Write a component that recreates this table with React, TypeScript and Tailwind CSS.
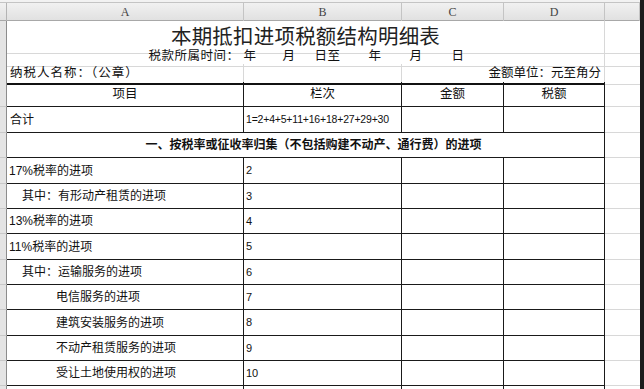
import React from 'react';

// column widths: row header, A, B, C, D, E
const GRID = 'grid grid-cols-[7px_237px_158px_102px_101px_35px] shrink-0';

const RowHead: React.FC = () => (
  <div className="bg-[#e4e4e4] border-r border-r-[#8c8c8c] border-b border-b-[#c8c8c8]" />
);

interface DataRow {
  label: string;
  no: string;
  indent: 0 | 1 | 2;
  h: string;
}

const rows: DataRow[] = [
  { label: '17%税率的进项', no: '2', indent: 0, h: 'h-[26px]' },
  { label: '其中：有形动产租赁的进项', no: '3', indent: 1, h: 'h-[25px]' },
  { label: '13%税率的进项', no: '4', indent: 0, h: 'h-[25px]' },
  { label: '11%税率的进项', no: '5', indent: 0, h: 'h-[26px]' },
  { label: '其中：运输服务的进项', no: '6', indent: 1, h: 'h-[25px]' },
  { label: '电信服务的进项', no: '7', indent: 2, h: 'h-[25px]' },
  { label: '建筑安装服务的进项', no: '8', indent: 2, h: 'h-[26px]' },
  { label: '不动产租赁服务的进项', no: '9', indent: 2, h: 'h-[25px]' },
  { label: '受让土地使用权的进项', no: '10', indent: 2, h: 'h-[25px]' },
  { label: '', no: '', indent: 0, h: 'h-[25px]' },
];

const indentClass = ['pl-[2px]', 'pl-[15px]', 'pl-[49px]'];

const cell = 'border-r border-b border-[#1a1a1a] flex items-center';
const light = 'border-b border-[#d8d8d8]';

export default function App() {
  return (
    <div className="w-[644px] h-[389px] overflow-hidden bg-white flex font-['Liberation_Sans','Noto_Sans_CJK_SC',sans-serif] text-[#111]">
      <div className="w-[640px] flex flex-col">
        {/* top edge */}
        <div className="h-[3px] shrink-0 bg-[#f2f2f2] border-b border-[#c4c4c4]" />

        {/* column letters */}
        <div className={`${GRID} h-[18px] bg-gradient-to-b from-[#f1f1f1] to-[#e1e1e1] border-b border-[#a8a8a8] font-['Liberation_Serif',serif] text-[12px] text-[#444]`}>
          <div className="border-r border-[#b4b4b4]" />
          {['A', 'B', 'C', 'D', ''].map((l, i) => (
            <div key={i} className="border-r border-[#c4c4c4] flex items-center justify-center">
              {l}
            </div>
          ))}
        </div>

        {/* title */}
        <div className={`${GRID} h-[26px]`}>
          <RowHead />
          <div className={`col-span-4 border-r border-[#d8d8d8] ${light} flex items-center justify-center pt-[1px] text-[20.5px] text-[#222] tracking-[0.2px]`}>
            本期抵扣进项税额结构明细表
          </div>
          <div className={light} />
        </div>

        {/* period */}
        <div className={`${GRID} h-[17px]`}>
          <RowHead />
          <div className={`col-span-4 border-r border-[#d8d8d8] ${light} flex items-center justify-center text-[12.5px] tracking-[0.5px] pl-[2px]`}>
            <span>税款所属时间：</span>
            <span className="ml-[4px]">年</span>
            <span className="ml-[26px]">月</span>
            <span className="ml-[19px]">日至</span>
            <span className="ml-[28px]">年</span>
            <span className="ml-[28px]">月</span>
            <span className="ml-[29px]">日</span>
          </div>
          <div className={light} />
        </div>

        {/* taxpayer */}
        <div className={`${GRID} h-[18px] text-[12.5px]`}>
          <RowHead />
          <div className="border-r border-[#d8d8d8] border-b-2 border-b-[#111] flex items-center pl-[3px] tracking-[1px]">
            纳税人名称：（公章）
          </div>
          <div className="border-r border-[#d8d8d8] border-b-2 border-b-[#111]" />
          <div className="col-span-2 border-r border-[#d8d8d8] border-b-2 border-b-[#111] flex items-center justify-end pr-[3px] whitespace-nowrap">
            金额单位：元至角分
          </div>
          <div className={light} />
        </div>

        {/* table header */}
        <div className={`${GRID} h-[25px] text-[12.5px]`}>
          <RowHead />
          <div className={`${cell} justify-center`}>项目</div>
          <div className={`${cell} justify-center`}>栏次</div>
          <div className={`${cell} justify-center`}>金额</div>
          <div className={`${cell} justify-center`}>税额</div>
          <div className={light} />
        </div>

        {/* total */}
        <div className={`${GRID} h-[26px] text-[12px]`}>
          <RowHead />
          <div className={`${cell} pl-[3px]`}>合计</div>
          <div className={`${cell} pl-[2px] text-[10.5px] tracking-[-0.2px]`}>1=2+4+5+11+16+18+27+29+30</div>
          <div className={cell} />
          <div className={cell} />
          <div className={light} />
        </div>

        {/* section */}
        <div className={`${GRID} h-[25px]`}>
          <RowHead />
          <div className={`col-span-4 ${cell} justify-center pl-[16px] text-[12px] font-bold`}>
            一、按税率或征收率归集（不包括购建不动产、通行费）的进项
          </div>
          <div className={light} />
        </div>

        {rows.map((r, i) => (
          <div key={i} className={`${GRID} ${r.h} text-[12px]`}>
            <RowHead />
            <div className={`${cell} ${indentClass[r.indent]} whitespace-nowrap`}>{r.label}</div>
            <div className={`${cell} pl-[2px] text-[11px]`}>{r.no}</div>
            <div className={cell} />
            <div className={cell} />
            <div className={light} />
          </div>
        ))}
      </div>
      <div className="w-[4px] bg-[#1c1c1c]" />
    </div>
  );
}
